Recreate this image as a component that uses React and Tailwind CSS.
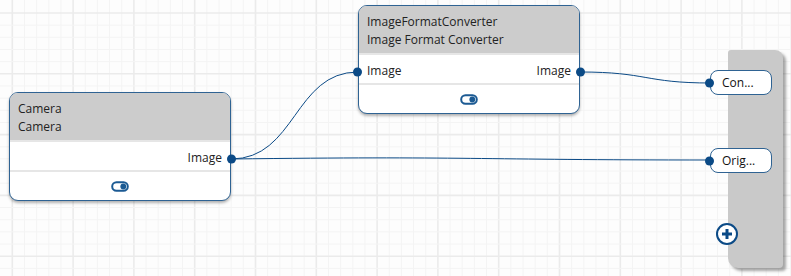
import React from 'react';

const NAVY = '#0b4a86';

// grid constants (canvas is zoomed, so the cells are not whole pixels)
const CELL = 12.16;
const GRID_X0 = 12.3;
const GRID_Y0 = 13;

const GridLines = () => {
  const lines = [];
  for (let i = 0; i < 70; i++) {
    const x = GRID_X0 + i * CELL;
    if (x > 791) break;
    const major = i % 5 === 0;
    lines.push(
      <line key={`v${i}`} x1={x} y1={0} x2={x} y2={276} stroke={major ? '#ebebeb' : '#f4f4f4'} strokeWidth={major ? 1.6 : 1} />
    );
  }
  for (let j = 0; j < 30; j++) {
    const y = GRID_Y0 + j * CELL;
    if (y > 276) break;
    const major = j % 5 === 0;
    lines.push(
      <line key={`h${j}`} x1={0} y1={y} x2={791} y2={y} stroke={major ? '#ebebeb' : '#f4f4f4'} strokeWidth={major ? 1.6 : 1} />
    );
  }
  return <g>{lines}</g>;
};

const ToggleIcon = () => (
  <svg width="18" height="11" viewBox="0 0 18 11">
    <rect x="1.2" y="1.2" width="15.6" height="8.6" rx="4.3" fill="none" stroke="#1b5a93" strokeWidth="2" />
    <circle cx="12.3" cy="5.5" r="2.9" fill="#1b5a93" />
  </svg>
);

const Dot = ({ side, className = 'top-1/2' }) => (
  <span
    className={`absolute -translate-y-1/2 w-[9px] h-[9px] rounded-full bg-[#0b4a86] ${className} ${
      side === 'left' ? '-left-[6px]' : '-right-[6px]'
    }`}
  />
);

const NodeCard = ({ className, name, label, input, output }) => (
  <div
    className={`absolute w-[222px] rounded-[9px] border-[1.5px] border-[#2f6393] bg-white shadow-[0_2px_3px_rgba(0,0,0,0.3)] ${className}`}
  >
    <div className="h-[47px] rounded-t-[7.5px] bg-[#cccccc] px-[8px] pt-[7px] text-[12px] leading-[17.5px] text-[#222]">
      <div>{name}</div>
      <div>{label}</div>
    </div>
    <div className="h-[2px] bg-[#e6e6e6]" />
    <div className="relative h-[28px] flex items-end justify-between px-[8px] pb-[3px] text-[12px] leading-[18px] text-[#222]">
      <span>{input}</span>
      <span>{output}</span>
      {input && <Dot side="left" className="top-[17px]" />}
      {output && <Dot side="right" className="top-[17px]" />}
    </div>
    <div className="h-[2px] bg-[#e6e6e6]" />
    <div className="h-[28px] flex items-center justify-center">
      <ToggleIcon />
    </div>
  </div>
);

const OutputPill = ({ label }) => (
  <div className="relative w-[62px] h-[25px] rounded-[8px] border-[1.5px] border-[#2f6393] bg-white flex items-center pl-[11px] text-[12px] text-[#111]">
    {label}
    <Dot side="left" />
  </div>
);

export default function App() {
  return (
    <div
      className="relative w-[791px] h-[276px] overflow-hidden bg-[#fdfdfd]"
      style={{ fontFamily: '"Open Sans", "Noto Sans", sans-serif' }}
    >
      <svg className="absolute inset-0" width="791" height="276">
        <GridLines />
        <g fill="none" stroke={NAVY} strokeWidth="1">
          <path d="M231 159 C 296 159, 294 72, 358 72" />
          <path d="M580 72 C 648 72, 644 83, 711 83" />
          <path d="M231 159 C 470 156, 470 160, 711 160" />
        </g>
      </svg>

      {/* output panel with its outputs */}
      <div className="absolute left-[728px] top-[50px] w-[55px] h-[218px] bg-[#c9c9c9] rounded-tl-[3px] rounded-tr-[8px] rounded-bl-[10px] rounded-br-[4px] shadow-[3px_3px_3px_rgba(0,0,0,0.35)]" />
      <div className="absolute left-[710px] top-[70px] flex flex-col items-start gap-[53px]">
        <OutputPill label="Con..." />
        <OutputPill label="Orig..." />
        <button className="ml-[6px] -mt-[3px] w-[22px] h-[22px] rounded-full border-2 border-[#0b4a86] bg-white flex items-center justify-center">
          <svg width="12" height="12" viewBox="0 0 12 12">
            <path d="M6 1 V11 M1 6 H11" stroke={NAVY} strokeWidth="3" />
          </svg>
        </button>
      </div>

      <NodeCard className="left-[9px] top-[92px]" name="Camera" label="Camera" output="Image" />
      <NodeCard
        className="left-[358px] top-[5px]"
        name="ImageFormatConverter"
        label="Image Format Converter"
        input="Image"
        output="Image"
      />
    </div>
  );
}
